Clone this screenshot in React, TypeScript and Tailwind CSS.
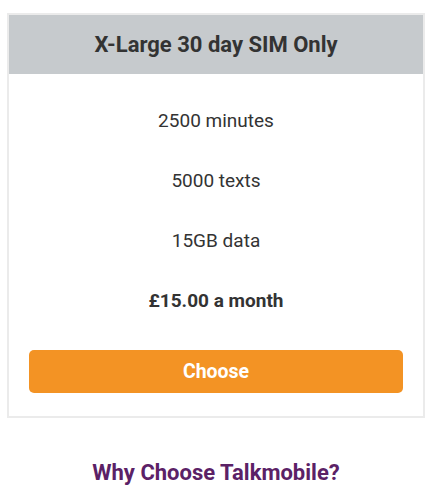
import React from "react";

const features = ["2500 minutes", "5000 texts", "15GB data"];

const App: React.FC = () => {
  return (
    <div className="min-h-[500px] bg-white font-['Roboto',sans-serif] text-[#333] pt-[13px]">
      {/* Plan card */}
      <div className="mx-[7px] border-2 border-[#ebebeb]">
        <div className="h-[59px] bg-[#c6cacd] flex items-center justify-center">
          <h2 className="text-[22px] font-bold text-[#333]">X-Large 30 day SIM Only</h2>
        </div>
        <div className="flex flex-col items-center pt-[35px]">
          {features.map((f) => (
            <p key={f} className="h-[60px] text-[19px] leading-[24px]">
              {f}
            </p>
          ))}
          <p className="h-[61px] text-[19px] leading-[24px] font-bold">£15.00 a month</p>
        </div>
        <div className="px-[20px] pb-[23px]">
          <button className="w-full h-[43px] rounded-[5px] bg-[#f39324] text-white text-[19.5px] font-bold">
            Choose
          </button>
        </div>
      </div>

      {/* Section heading */}
      <h3 className="mt-[38px] text-center text-[22px] font-bold text-[#5b2166]">
        Why Choose Talkmobile?
      </h3>
    </div>
  );
};

export default App;
